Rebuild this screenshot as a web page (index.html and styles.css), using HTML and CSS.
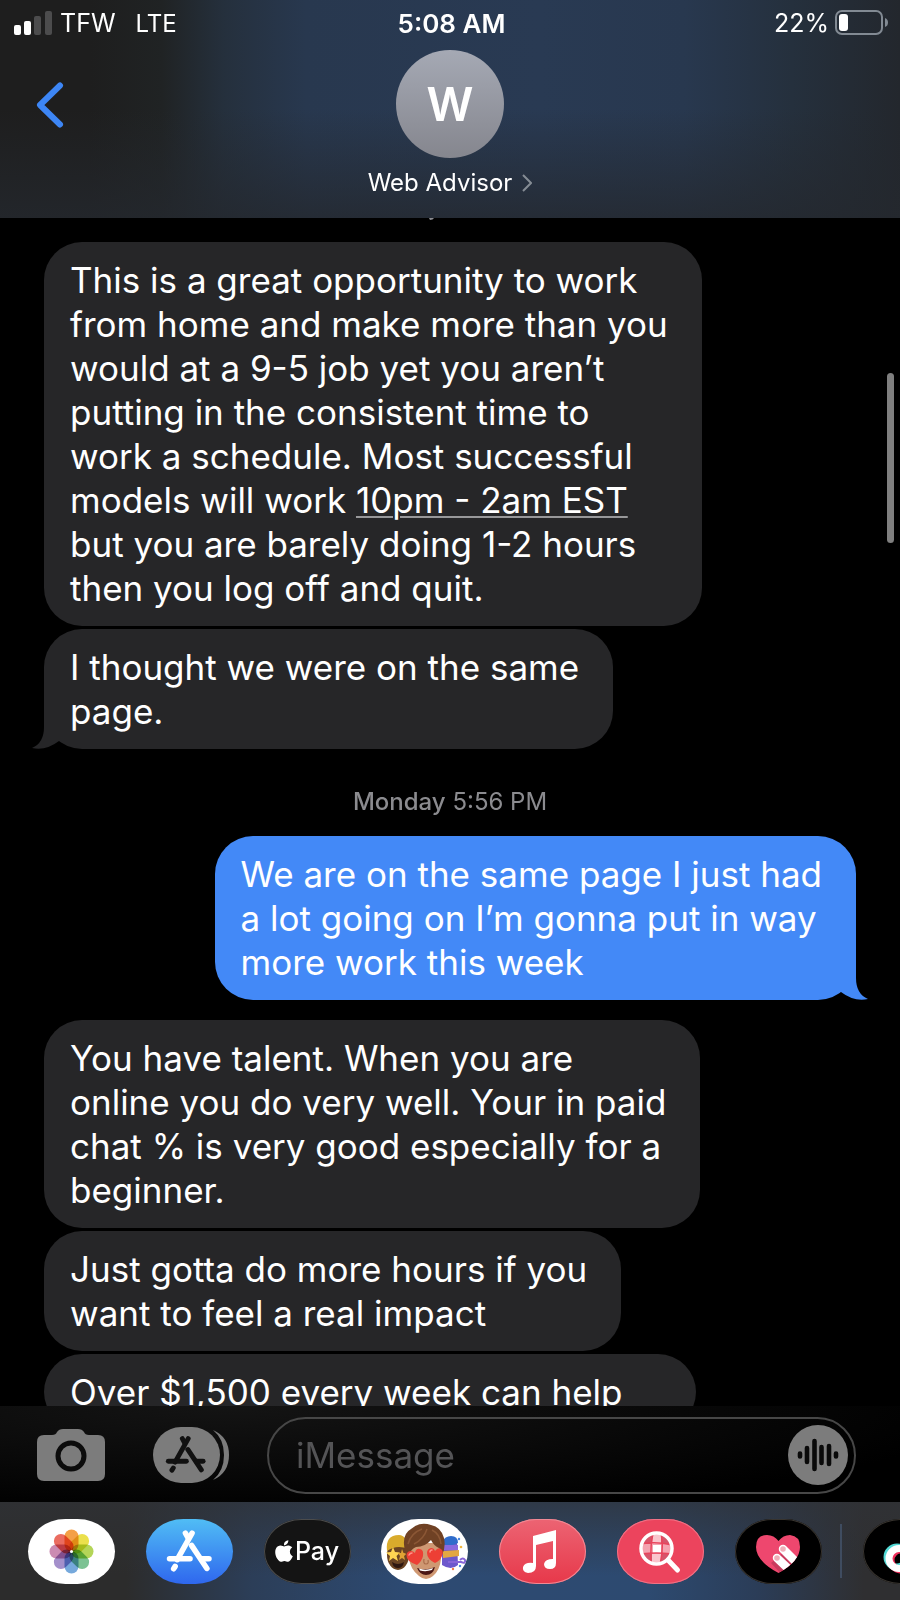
FILE: index.html
```html
<!DOCTYPE html>
<html lang="en">
<head>
  <meta charset="UTF-8"/>
  <meta name="viewport" content="width=device-width, initial-scale=1.0"/>
  <title>Web Advisor</title>
  <link rel="stylesheet" href="styles.css">
</head>
<body>
  <svg class="defs" aria-hidden="true">
    <symbol id="a-glyph" viewBox="0 0 44 42">
      <g fill="none" stroke="currentColor" stroke-width="5.4" stroke-linecap="round">
        <path d="M25 4 L10.500 30"/>
        <path d="M18.500 4 L21 8.500"/>
        <path d="M24.500 16 L39.500 38.500"/>
        <path d="M3 29 H23"/>
        <path d="M34 29 H41.500"/>
        <path d="M8.500 36.500 L7 38.800"/>
      </g>
    </symbol>
  </svg>

  <header class="top">
    <div class="status">
      <div class="status-left">
        <svg class="signal" viewBox="0 0 38 24">
          <rect x="0" y="14" width="7" height="10" rx="2" fill="#fff"/>
          <rect x="10" y="10" width="7" height="14" rx="2" fill="#fff"/>
          <rect x="20" y="5" width="7" height="19" rx="2" fill="#4c4c4d"/>
          <rect x="31" y="0" width="7" height="24" rx="2" fill="#4c4c4d"/>
        </svg>
        <span>TFW</span>
        <span class="network">LTE</span>
      </div>
      <time class="clock">5:08 AM</time>
      <div class="status-right">
        <span>22%</span>
        <svg class="battery" viewBox="0 0 54 26">
          <rect x="1" y="1" width="46" height="23" rx="6" fill="none" stroke="#828a93" stroke-width="2"/>
          <rect x="4" y="4" width="9" height="17" rx="3" fill="#fff"/>
          <path d="M50 8 Q53 9 53 12.500 Q53 16 50 17 Z" fill="#828a93"/>
        </svg>
      </div>
    </div>
    <div class="nav">
      <button class="back" aria-label="Back">
        <svg viewBox="0 0 28 46"><path d="M24 3.500 L4 23 L24 42.500" fill="none" stroke="#3d86f5" stroke-width="6" stroke-linecap="round" stroke-linejoin="round"/></svg>
      </button>
      <div class="contact">
        <div class="avatar">W</div>
        <button class="contact-name">
          Web Advisor
          <svg viewBox="0 0 10 18"><path d="M1 1 L9 9 L1 17" fill="none" stroke="#858c94" stroke-width="2"/></svg>
        </button>
      </div>
    </div>
  </header>

  <main class="chat">
    <svg class="cut-mark" viewBox="0 0 6 3"><path d="M0 0 H5 Q4 2 1 2 Z" fill="#8e8e93"/></svg>
    <p class="bubble them">This is a great opportunity to work<br>from home and make more than you<br>would at a 9-5 job yet you aren’t<br>putting in the consistent time to<br>work a schedule. Most successful<br>models will work <a href="#">10pm - 2am EST</a><br>but you are barely doing 1-2 hours<br>then you log off and quit.</p>
    <p class="bubble them">I thought we were on the same<br>page.
      <svg class="tail" viewBox="0 0 32 40"><path d="M12 0 V18 Q12 34 0 39 Q14 42 27 32 L32 28 V0 Z" fill="#262628"/></svg>
    </p>
    <p class="stamp"><b>Monday</b> 5:56 PM</p>
    <p class="bubble me">We are on the same page I just had<br>a lot going on I’m gonna put in way<br>more work this week
      <svg class="tail" viewBox="0 0 32 40"><path d="M12 0 V18 Q12 34 0 39 Q14 42 27 32 L32 28 V0 Z" fill="#4389f7"/></svg>
    </p>
    <p class="bubble them">You have talent. When you are<br>online you do very well. Your in paid<br>chat % is very good especially for a<br>beginner.</p>
    <p class="bubble them">Just gotta do more hours if you<br>want to feel a real impact</p>
    <p class="bubble them wide">Over $1,500 every week can help</p>
    <div class="scrollbar"></div>
  </main>

  <form class="composer">
    <button type="button" class="tool" aria-label="Camera">
      <svg class="camera" viewBox="0 0 68 54">
        <path d="M7 7 H15 Q19 7 20 4 Q22 1 26 1 H41 Q45 1 47 4 Q48 7 52 7 H61 Q68 7 68 14 V46 Q68 53 61 53 H7 Q0 53 0 46 V14 Q0 7 7 7 Z" fill="#7c7c7c"/>
        <circle cx="34" cy="28" r="13" fill="none" stroke="#0c0c0c" stroke-width="5"/>
      </svg>
    </button>
    <button type="button" class="tool apps" aria-label="Apps">
      <svg class="apps-icon" viewBox="0 0 76 56">
        <rect x="0" y="0" width="67" height="56" rx="28" fill="#7c7c7c"/>
        <path d="M60 3 Q76 10 76 28 Q76 46 60 53 Q71 44 71 28 Q71 12 60 3 Z" fill="#7c7c7c"/>
        <use href="#a-glyph" x="12" y="8" width="41" height="38" color="#111"/>
      </svg>
    </button>
    <div class="field">
      <input type="text" placeholder="iMessage" aria-label="iMessage">
      <button type="button" class="audio" aria-label="Record audio">
        <svg viewBox="0 0 60 60" stroke="#0a0a0a" stroke-width="4.600" stroke-linecap="round">
          <path d="M12 28.500 V31.500 M19 23 V37 M26.500 16 V44 M33.500 22 V38 M41 21 V39 M48 28.500 V31.500"/>
        </svg>
      </button>
    </div>
  </form>

  <footer class="strip">
    <nav class="app-list">
      <button class="app photos" aria-label="Photos">
        <svg viewBox="0 0 87 65">
          <g class="petals" transform="translate(43.500 32.500)">
            <rect x="-7" y="-22" width="14" height="22" rx="7" fill="#f4a046"/>
            <rect x="-7" y="-22" width="14" height="22" rx="7" fill="#ebe04c" transform="rotate(45)"/>
            <rect x="-7" y="-22" width="14" height="22" rx="7" fill="#b4d558" transform="rotate(90)"/>
            <rect x="-7" y="-22" width="14" height="22" rx="7" fill="#7cc293" transform="rotate(135)"/>
            <rect x="-7" y="-22" width="14" height="22" rx="7" fill="#76a9dc" transform="rotate(180)"/>
            <rect x="-7" y="-22" width="14" height="22" rx="7" fill="#a490cb" transform="rotate(225)"/>
            <rect x="-7" y="-22" width="14" height="22" rx="7" fill="#cb8bb2" transform="rotate(270)"/>
            <rect x="-7" y="-22" width="14" height="22" rx="7" fill="#ea6c60" transform="rotate(315)"/>
          </g>
          <circle cx="43.500" cy="32.500" r="1.500" fill="#fff"/>
        </svg>
      </button>
      <button class="app store" aria-label="App Store">
        <svg viewBox="0 0 87 65"><use href="#a-glyph" x="20" y="10" width="46" height="43" color="#fff"/></svg>
      </button>
      <button class="app pay" aria-label="Apple Pay">
        <svg class="apple" viewBox="2 0 20 24"><path fill="#fff" d="M12.152 6.896c-.948 0-2.415-1.078-3.960-1.040-2.040.027-3.910 1.183-4.961 3.014-2.117 3.675-.546 9.103 1.519 12.090 1.013 1.454 2.208 3.090 3.792 3.039 1.520-.065 2.090-.987 3.935-.987 1.831 0 2.350.987 3.960.948 1.637-.026 2.676-1.480 3.676-2.948 1.156-1.688 1.636-3.325 1.662-3.415-.039-.013-3.182-1.221-3.220-4.857-.026-3.040 2.480-4.494 2.597-4.559-1.429-2.090-3.623-2.324-4.390-2.376-2-.156-3.675 1.090-4.610 1.090zM15.530 3.830c.843-1.012 1.400-2.427 1.245-3.830-1.207.052-2.662.805-3.532 1.818-.780.896-1.454 2.338-1.273 3.714 1.338.104 2.715-.688 3.559-1.701"/></svg>
        <span>Pay</span>
      </button>
      <button class="app memoji" aria-label="Memoji">
        <svg viewBox="0 0 87 65">
          <!-- left face with star eyes -->
          <ellipse cx="17" cy="36" rx="11" ry="15" fill="#6b4423"/>
          <path d="M6 32 Q4 16 18 16 Q26 16 27 30 Q16 25 6 32 Z" fill="#d9ab2c"/>
          <path d="M11 43 Q17 47 23 43 Q22 49 17 49 Q12 49 11 43 Z" fill="#2e1711"/>
          <path d="M12 28 L14 33 L19 33.500 L15.500 37 L17 42 L12 39 L8 42 L9 37 L5 33.500 L10 33 Z" fill="#ffd452"/>
          <path d="M21 30 L22.500 34 L26 34.500 L23 37 L24 41 L21 39 L18 41 L19 37 L17 34 L20 34 Z" fill="#e0a334"/>
          <!-- right face with party hat -->
          <path d="M61 23 Q64 18 70 18 Q76 18 76 23 L77 46 Q70 52 61 46 Z" fill="#6d58cc"/>
          <path d="M61 23 Q64 17 70 17 Q77 17 77 24 Q70 28 61 25 Z" fill="#2f6ccb"/>
          <path d="M62 26 H77 V31 H62 Z" fill="#8a69dd"/>
          <path d="M62 32 L78 31 V37 L62 39 Z" fill="#e3a742"/>
          <path d="M67 43 H80 Q85 45 84 41 Q82 38 79 41" fill="none" stroke="#8765d8" stroke-width="2"/>
          <circle cx="78" cy="20" r="1.200" fill="#4a87e0"/>
          <circle cx="80" cy="28" r="1.300" fill="#f3b741"/>
          <circle cx="79" cy="47" r="1.200" fill="#4a87e0"/>
          <circle cx="72" cy="50" r="1.200" fill="#ef7b45"/>
          <!-- middle face with heart eyes -->
          <path d="M28 24 H60 V40 Q59 51 52 57 Q45 63 38 57 Q29 50 28 39 Z" fill="#cf9872"/>
          <path d="M25 36 Q19 16 30 10 Q39 2 50 6 Q60 8 63 19 Q65 28 61 36 Q60 32 58 29 Q53 27 50 21 Q44 28 35 28 Q30 30 28 36 Z" fill="#6f4124"/>
          <path d="M27 25 Q30 14 41 10 M33 25 Q43 20 46 10 M51 11 Q59 15 60 25" fill="none" stroke="#8b5735" stroke-width="1.500"/>
          <path d="M36 49 Q45 52 54 48 Q52 56 45 56 Q39 56 36 49 Z" fill="#4b1715"/>
          <path d="M38 49.600 Q45 52 52 49 L51 51 Q45 53 39 51.500 Z" fill="#fff"/>
          <path d="M43 40 Q42 45 45 45 Q48 45 47 41" fill="none" stroke="#a96b49" stroke-width="1.200"/>
          <path d="M36 46 Q25 42 25.500 36 Q26 32 30 32 Q32 32 34 34 Q35 29 39 30 Q43 31 42 37 Q41 42 36 46 Z" fill="#ed3f35"/>
          <path d="M54 44 Q46 40 46 34 Q46 30 50 29 Q53 29 54 32 Q57 28 60 30 Q63 32 61 37 Q59 42 54 44 Z" fill="#ed3f35"/>
          <path d="M28 36 Q29 34 31 34 M49 33 Q49 31 51 31" fill="none" stroke="#ff938a" stroke-width="1.500" stroke-linecap="round"/>
        </svg>
      </button>
      <button class="app music" aria-label="Music">
        <svg viewBox="0 0 87 65">
          <path d="M34 17 L57 11 V44 Q57 50 51 50 Q45 50 45 45 Q46 40 54 40 V22 L37 26 V47 Q37 54 29 54 Q23 53 24 48 Q26 43 34 44 Z" fill="#fff"/>
        </svg>
      </button>
      <button class="app search" aria-label="Image search">
        <svg viewBox="0 0 87 65">
          <clipPath id="lens"><circle cx="39.500" cy="29.500" r="14"/></clipPath>
          <g clip-path="url(#lens)">
            <rect x="25" y="15" width="30" height="30" fill="#f4a3b0"/>
            <path d="M25 15 H35 V25 H25 Z M44 15 H55 V25 H44 Z M25 34 H35 V45 H25 Z M44 34 H55 V45 H44 Z" fill="#d6556b"/>
            <path d="M35 15 H44 V25 H35 Z M35 35 H44 V45 H35 Z" fill="#fac5cd"/>
            <rect x="36" y="26" width="8" height="8" fill="#fff"/>
            <path d="M36 14 Q33 28 34 46 M44 14 Q47 28 43 46 M24 25 Q39 22 55 26 M24 35 Q39 33 55 35" fill="none" stroke="#e8445c" stroke-width="1.500"/>
          </g>
          <circle cx="39.500" cy="29.500" r="15.500" fill="none" stroke="#fff" stroke-width="3.500"/>
          <path d="M51 41 L60.500 51" stroke="#fff" stroke-width="5" stroke-linecap="round"/>
        </svg>
      </button>
      <button class="app touch" aria-label="Digital Touch">
        <svg viewBox="0 0 87 65">
          <clipPath id="heart"><path d="M43.500 54 Q21 42 21 28 Q21 16 32 16 Q39 16 43.500 22 Q48 16 55 16 Q65 17 65 28 Q65 42 43.500 54 Z"/></clipPath>
          <g clip-path="url(#heart)">
            <rect x="20" y="14" width="46" height="42" fill="#ee476e"/>
            <path d="M36 44 L47 56 L66 46 L50 32 Z" fill="#c93c5e"/>
            <path d="M42 39 L60 56" stroke="#fff" stroke-width="8.500" stroke-linecap="round"/>
            <path d="M48 30 L68 50" stroke="#fff" stroke-width="8.500" stroke-linecap="round"/>
            <circle cx="42" cy="39" r="2.800" fill="#efafb9"/>
            <circle cx="48" cy="30" r="2.800" fill="#efafb9"/>
          </g>
        </svg>
      </button>
    </nav>
    <div class="divider"></div>
    <button class="app tiktok" aria-label="TikTok">
      <svg viewBox="0 0 87 65">
        <g fill="none" stroke-width="7">
          <circle cx="34" cy="38" r="10" stroke="#52d8d4"/>
          <circle cx="38" cy="41" r="10" stroke="#f0305c"/>
          <circle cx="36" cy="39.500" r="10" stroke="#fff"/>
        </g>
      </svg>
    </button>
  </footer>
</body>
</html>
```

FILE: styles.css
```css
* {
  margin: 0;
  padding: 0;
  box-sizing: border-box;
}
body {
  height: 100vh;
  display: flex;
  flex-direction: column;
  overflow: hidden;
  background: #000;
  color: #fff;
  font-family: 'Inter', 'Liberation Sans', sans-serif;
}
button {
  border: none;
  background: none;
  color: inherit;
  font: inherit;
  cursor: pointer;
}
svg {
  display: block;
}
.defs {
  position: absolute;
  width: 0;
  height: 0;
}

/* header */
.top {
  flex: none;
  height: 218px;
  background:
    linear-gradient(180deg, transparent 50%, rgba(36, 40, 46, 0.8) 100%),
    linear-gradient(90deg, #1e1e1e 10%, #202324 18%, #25303d 25%, #28384f 34%, #293a53 60%, #28384f 76%, #25303d 88%, #23272d 100%);
}
.status {
  display: grid;
  grid-template-columns: 1fr auto 1fr;
  align-items: center;
  height: 46px;
  padding: 0 11px 0 14px;
  font-size: 25px;
}
.status-left,
.status-right {
  display: flex;
  align-items: center;
  gap: 8px;
}
.status-right {
  justify-content: flex-end;
  gap: 6px;
}
.network {
  margin-left: 12px;
  font-size: 24px;
}
.signal {
  width: 38px;
  height: 24px;
}
.battery {
  width: 54px;
  height: 26px;
}
.clock {
  font-size: 26px;
  font-weight: 600;
}
.nav {
  display: grid;
  grid-template-columns: 1fr auto 1fr;
  align-items: start;
  padding: 4px 36px 0;
}
.back {
  justify-self: start;
  margin-top: 32px;
}
.back svg {
  width: 28px;
  height: 46px;
}
.contact {
  display: flex;
  flex-direction: column;
  align-items: center;
  gap: 10px;
}
.avatar {
  width: 108px;
  height: 108px;
  border-radius: 50%;
  background: linear-gradient(#a5a9b4, #85868e);
  display: flex;
  align-items: center;
  justify-content: center;
  font-size: 46px;
  font-weight: 600;
}
.contact-name {
  display: flex;
  align-items: center;
  gap: 10px;
  font-size: 24px;
  line-height: 30px;
}
.contact-name svg {
  width: 10px;
  height: 18px;
}

/* messages */
.chat {
  flex: 1;
  min-height: 0;
  overflow: hidden;
  position: relative;
  display: flex;
  flex-direction: column;
  align-items: flex-start;
  gap: 3px;
  padding: 0 44px;
}
.cut-mark {
  flex: none;
  align-self: center;
  width: 6px;
  height: 3px;
  margin: 0 36px 18px 0;
}
.bubble {
  flex: none;
  position: relative;
  padding: 16px 34px 16px 26px;
  border-radius: 38px;
  font-size: 35px;
  line-height: 44px;
  white-space: nowrap;
}
.them {
  background: #262628;
}
.me {
  align-self: flex-end;
  background: #4389f7;
  margin-bottom: 17px;
}
.wide {
  padding-right: 74px;
}
.bubble a {
  color: #fff;
  text-decoration: underline;
  text-decoration-color: #98989a;
  text-decoration-thickness: 2px;
  text-underline-offset: 3px;
}
.tail {
  position: absolute;
  bottom: 0;
  left: -12px;
  width: 32px;
  height: 40px;
}
.me .tail {
  left: auto;
  right: -12px;
  transform: scaleX(-1);
}
.stamp {
  align-self: center;
  margin: 36px 0 17px;
  color: #8b8b8f;
  font-size: 24px;
  line-height: 28px;
}
.stamp b {
  font-weight: 500;
}
.scrollbar {
  position: absolute;
  top: 155px;
  right: 6px;
  width: 7px;
  height: 170px;
  border-radius: 4px;
  background: #7f7f7f;
}

/* composer */
.composer {
  flex: none;
  display: flex;
  align-items: center;
  height: 96px;
  padding: 2px 44px 0 37px;
  background: radial-gradient(ellipse at 25% 0, #141414, #000 80%);
}
.tool {
  flex: none;
}
.camera {
  width: 68px;
  height: 54px;
}
.apps {
  margin: 0 38px 0 48px;
}
.apps-icon {
  width: 76px;
  height: 56px;
}
.field {
  flex: 1;
  min-width: 0;
  display: flex;
  align-items: center;
  height: 77px;
  padding: 0 6px 0 27px;
  border: 2px solid #474747;
  border-radius: 39px;
}
.field input {
  flex: 1;
  width: 100%;
  min-width: 0;
  border: none;
  outline: none;
  background: none;
  color: #fff;
  font-family: inherit;
  font-size: 35px;
}
.field input::placeholder {
  color: #545456;
}
.audio {
  flex: none;
  width: 60px;
  height: 60px;
  border-radius: 50%;
  background: #7c7c7c;
}

/* app strip */
.strip {
  flex: none;
  display: flex;
  align-items: center;
  height: 98px;
  padding-left: 28px;
  overflow: hidden;
  background:
    linear-gradient(180deg, rgba(48, 50, 54, 0.7), transparent 75%),
    linear-gradient(90deg, #2c2c2c 14%, #2c3e58 28%, #2d4a72 45%, #2d4a70 72%, #2b3d58 84%, #2f2f31 96%);
}
.app-list {
  flex: 0 0 91%;
  display: flex;
  justify-content: space-between;
}
.app {
  flex: none;
  display: flex;
  align-items: center;
  justify-content: center;
  width: 87px;
  height: 65px;
  border-radius: 38px / 33px;
  overflow: hidden;
}
.app svg {
  flex: none;
  width: 87px;
  height: 65px;
}
.photos,
.memoji {
  background: #fff;
}
.petals rect {
  mix-blend-mode: multiply;
}
.store {
  background: linear-gradient(#50bdf5, #2f67ee);
}
.pay {
  gap: 2px;
  background: #141414;
  box-shadow: inset 0 0 0 1px #4c4c4c;
  font-size: 25px;
  font-weight: 500;
}
.pay .apple {
  width: 18px;
  height: 22px;
}
.music {
  background: linear-gradient(#ec6473, #e7384a);
  box-shadow: inset 0 0 0 1px #f08a95;
}
.search {
  background: #ec445d;
  box-shadow: inset 0 0 0 1px #ef7386;
}
.touch,
.tiktok {
  background: #000;
  box-shadow: inset 0 0 0 1px #38342f;
}
.divider {
  flex: none;
  width: 2px;
  height: 54px;
  margin: 0 21px 0 18px;
  background: #3f4c60;
}
```
